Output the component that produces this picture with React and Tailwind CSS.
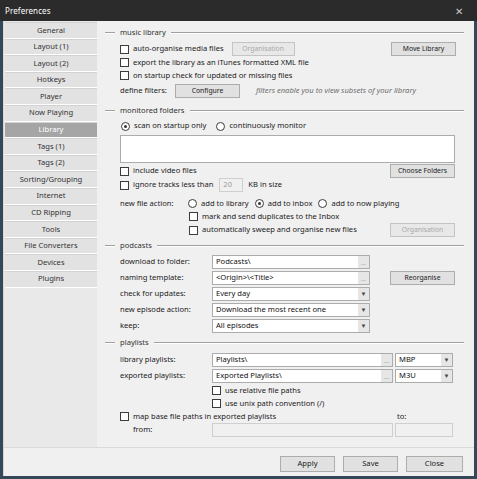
import React from 'react';

const NAV = [
  'General', 'Layout (1)', 'Layout (2)', 'Hotkeys', 'Player', 'Now Playing', 'Library',
  'Tags (1)', 'Tags (2)', 'Sorting/Grouping', 'Internet', 'CD Ripping', 'Tools',
  'File Converters', 'Devices', 'Plugins',
];

function Check({ label, className = '' }) {
  return (
    <div className={`flex items-center gap-[4px] ${className}`}>
      <span className="w-[9px] h-[9px] border border-[#3c3c3c] bg-white shrink-0" />
      {label && <span>{label}</span>}
    </div>
  );
}

function Radio({ label, on }) {
  return (
    <div className="flex items-center gap-[4px]">
      <span className="w-[9px] h-[9px] rounded-full border border-[#3c3c3c] bg-white shrink-0 flex items-center justify-center">
        {on && <span className="w-[3px] h-[3px] rounded-full bg-[#333]" />}
      </span>
      <span>{label}</span>
    </div>
  );
}

function Btn({ children, disabled, className = '' }) {
  return (
    <div
      className={`flex items-center justify-center border ${
        disabled ? 'border-[#c4c4c4] bg-[#e8e8e8] text-[#a8a8a8]' : 'border-[#adadad] bg-[#e1e1e1] text-[#1a1a1a]'
      } ${className}`}
    >
      {children}
    </div>
  );
}

function Header({ title }) {
  return (
    <div className="h-[14px] flex items-center pl-[8px] pr-[10px]">
      <span className="w-[10px] border-t border-b border-t-[#a0a0a0] border-b-white" />
      <span className="px-[5px] text-[#333]">{title}</span>
      <span className="flex-1 border-t border-b border-t-[#a0a0a0] border-b-white" />
    </div>
  );
}

function Field({ value, dots, arrow, className = '' }) {
  return (
    <div className={`h-[14px] flex items-stretch border border-[#acacac] bg-white ${className}`}>
      <span className="flex-1 pl-[3px] flex items-center text-[#111] truncate">{value}</span>
      {dots && (
        <span className="w-[11px] bg-[#e6e6e6] text-[#888] flex items-end justify-center leading-[9px] text-[6px]">...</span>
      )}
      {arrow && (
        <span className="w-[11px] bg-[#e6e6e6] text-[#444] flex items-center justify-center text-[6px]">▼</span>
      )}
    </div>
  );
}

function Row({ label, children, className = '' }) {
  return (
    <div className={`h-[16px] flex items-center ${className}`}>
      <span className="w-[92px] shrink-0">{label}</span>
      {children}
    </div>
  );
}

export default function App() {
  return (
    <div className="w-[477px] h-[479px] bg-[#34485a] flex flex-col font-['Noto_Sans',sans-serif] text-[7.6px] text-[#1f1f1f] leading-none overflow-hidden">
      {/* title bar */}
      <div className="h-[21px] bg-[#2b2b2b] flex items-center justify-between pl-[5px] pr-[14px] text-white">
        <span className="text-[8px] tracking-[0.1px]">Preferences</span>
        <span className="text-[#c8c8c8] text-[10px]">✕</span>
      </div>

      <div className="flex-1 mx-[3px] mb-[3px] bg-[#f0f0f0] flex flex-col border-l border-[#d6d6d6]">
        <div className="h-[427px] flex border-b border-[#dadada]">
          {/* sidebar */}
          <div className="w-[93px] bg-[#e9e9e9] pt-[1px] pl-[1px]">
            {NAV.map(n => (
              <div
                key={n}
                className={`h-[16.6px] flex items-center justify-center border-b border-b-white border-t border-t-[#d2d2d2] ${
                  n === 'Library' ? 'bg-[#a5a5a5] text-white' : 'bg-[#e2e2e2] text-[#333]'
                }`}
              >
                {n}
              </div>
            ))}
          </div>

          {/* panel */}
          <div className="flex-1 pt-[5px] text-[#222]">
            <Header title="music library" />
            <div className="ml-[23px] w-[336px]">
              <div className="h-[14px] mt-[2px] flex items-center">
                <Check label="auto-organise media files" />
                <Btn disabled className="ml-[8px] w-[63px] h-[14px] text-[6.8px]">Organisation</Btn>
                <Btn className="ml-auto w-[65px] h-[14px] text-[6.8px]">Move Library</Btn>
              </div>
              <div className="h-[13px] flex items-center"><Check label="export the library as an iTunes formatted XML file" /></div>
              <div className="h-[13px] flex items-center"><Check label="on startup check for updated or missing files" /></div>
              <div className="h-[14px] mt-[2px] flex items-center">
                <span className="w-[55px]">define filters:</span>
                <Btn className="w-[65px] h-[14px] text-[6.8px]">Configure</Btn>
                <span className="ml-[16px] italic text-[#6d6d6d]">filters enable you to view subsets of your library</span>
              </div>
            </div>

            <div className="mt-[6px]"><Header title="monitored folders" /></div>
            <div className="ml-[23px] w-[336px]">
              <div className="h-[14px] mt-[1px] flex items-center gap-[10px] pl-[1px]">
                <Radio label="scan on startup only" on />
                <Radio label="continuously monitor" />
              </div>
              <div className="mt-[2px] h-[28px] w-[335px] border border-[#acacac] bg-white" />
              <div className="h-[14px] mt-[1px] flex items-center">
                <Check label="include video files" />
                <Btn className="ml-auto mr-[1px] w-[65px] h-[14px] text-[6.8px]">Choose Folders</Btn>
              </div>
              <div className="h-[14px] flex items-center">
                <Check label="ignore tracks less than" />
                <span className="ml-[6px] w-[24px] h-[14px] border border-[#cfcfcf] bg-[#f0f0f0] text-[#9a9a9a] flex items-center pl-[3px]">20</span>
                <span className="ml-[5px]">KB in size</span>
              </div>
              <div className="h-[13px] mt-[5px] flex items-center">
                <span className="w-[68px]">new file action:</span>
                <div className="flex items-center gap-[6px]">
                  <Radio label="add to library" />
                  <Radio label="add to inbox" on />
                  <Radio label="add to now playing" />
                </div>
              </div>
              <div className="h-[13px] flex items-center pl-[69px]">
                <Check label="mark and send duplicates to the Inbox" />
              </div>
              <div className="h-[14px] flex items-center pl-[69px]">
                <Check label="automatically sweep and organise new files" />
                <Btn disabled className="ml-auto mr-[1px] w-[65px] h-[14px] text-[6.8px]">Organisation</Btn>
              </div>
            </div>

            <div className="mt-[2px]"><Header title="podcasts" /></div>
            <div className="ml-[23px] w-[336px] mt-[1px]">
              <Row label="download to folder:"><Field value="Podcasts\" dots className="w-[158px]" /></Row>
              <Row label="naming template:">
                <Field value="<Origin>\<Title>" dots className="w-[158px]" />
                <Btn className="ml-auto mr-[1px] w-[65px] h-[14px] text-[6.8px]">Reorganise</Btn>
              </Row>
              <Row label="check for updates:"><Field value="Every day" arrow className="w-[158px]" /></Row>
              <Row label="new episode action:"><Field value="Download the most recent one" arrow className="w-[158px]" /></Row>
              <Row label="keep:"><Field value="All episodes" arrow className="w-[158px]" /></Row>
            </div>

            <div className="mt-[2px]"><Header title="playlists" /></div>
            <div className="ml-[23px] w-[336px] mt-[2px]">
              <Row label="library playlists:">
                <Field value="Playlists\" dots className="w-[181px]" />
                <Field value="MBP" arrow className="ml-[2px] w-[58px]" />
              </Row>
              <Row label="exported playlists:">
                <Field value="Exported Playlists\" dots className="w-[181px]" />
                <Field value="M3U" arrow className="ml-[2px] w-[58px]" />
              </Row>
              <div className="h-[13px] flex items-center pl-[92px]"><Check label="use relative file paths" /></div>
              <div className="h-[13px] flex items-center pl-[92px]"><Check label="use unix path convention (/)" /></div>
              <div className="h-[13px] flex items-center">
                <Check label="map base file paths in exported playlists" />
                <span className="ml-auto w-[60px] pl-[1px]">to:</span>
              </div>
              <div className="h-[14px] flex items-center">
                <span className="w-[92px] pl-[13px]">from:</span>
                <span className="w-[181px] h-[14px] border border-[#cfcfcf] bg-[#f0f0f0]" />
                <span className="ml-[2px] w-[58px] h-[14px] border border-[#cfcfcf] bg-[#f0f0f0]" />
              </div>
            </div>
          </div>
        </div>

        {/* footer */}
        <div className="flex-1 flex justify-end items-start pt-[8px] pr-[11px] gap-[8px]">
          <Btn className="w-[55px] h-[16px] text-[7.6px]">Apply</Btn>
          <Btn className="w-[55px] h-[16px] text-[7.6px]">Save</Btn>
          <Btn className="w-[57px] h-[16px] text-[7.6px]">Close</Btn>
        </div>
      </div>
    </div>
  );
}
